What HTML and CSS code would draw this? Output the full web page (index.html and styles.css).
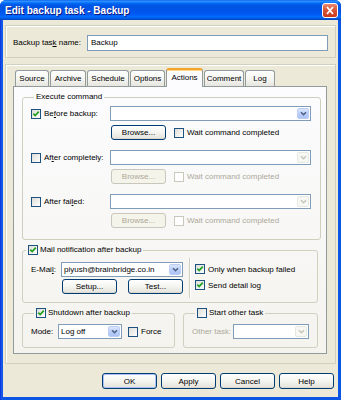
FILE: index.html
```html
<!DOCTYPE html>
<html lang="en">
<head>
    <meta charset="UTF-8">
    <title>Edit backup task - Backup</title>
    <link rel="stylesheet" href="styles.css">
</head>
<body>
<div class="window">
    <div class="titlebar">
        <span class="title">Edit backup task - Backup</span>
        <span class="close-btn">
            <svg width="14" height="13" viewBox="0 0 14 13"><path d="M4 3 L10 10 M10 3 L4 10"/></svg>
        </span>
    </div>

    <div class="client">
        <!-- task name -->
        <div class="frame name-frame">
            <label class="name-label">Backup tas<u>k</u> name:</label>
            <div class="textbox">Backup</div>
        </div>

        <!-- tabs -->
        <div class="frame tabs-frame">
            <div class="tab-strip">
                <span class="tab tab-source">Source</span>
                <span class="tab tab-archive">Archive</span>
                <span class="tab tab-schedule">Schedule</span>
                <span class="tab tab-options">Options</span>
                <span class="tab tab-actions active">Actions</span>
                <span class="tab tab-comment">Comment</span>
                <span class="tab tab-log">Log</span>
            </div>

            <div class="tab-panel">
                <fieldset class="group exec-group">
                    <legend>Execute command</legend>

                    <div class="cmd-row">
                        <label class="check-label cmd-label"><span class="checkbox checked"><svg viewBox="0 0 8 8"><path d="M1.3 3.6 L3.2 5.6 L6.8 1.7"/></svg></span><span>Be<u>f</u>ore backup:</span></label>
                        <div class="combo cmd-combo"><span class="combo-text"></span><span class="drop"><svg viewBox="0 0 9 9"><path d="M2 3.2 L4.5 5.7 L7 3.2"/></svg></span></div>
                    </div>
                    <div class="browse-row">
                        <button class="btn">Browse...</button>
                        <label class="check-label wait-label"><span class="checkbox"></span><span>Wait command completed</span></label>
                    </div>

                    <div class="cmd-row">
                        <label class="check-label cmd-label"><span class="checkbox"></span><span>Af<u>t</u>er completely:</span></label>
                        <div class="combo cmd-combo disabled"><span class="combo-text"></span><span class="drop"><svg viewBox="0 0 9 9"><path d="M2 3.2 L4.5 5.7 L7 3.2"/></svg></span></div>
                    </div>
                    <div class="browse-row">
                        <button class="btn" disabled>Browse...</button>
                        <label class="check-label wait-label disabled"><span class="checkbox"></span><span>Wait command completed</span></label>
                    </div>

                    <div class="cmd-row">
                        <label class="check-label cmd-label"><span class="checkbox"></span><span>After fai<u>l</u>ed:</span></label>
                        <div class="combo cmd-combo disabled"><span class="combo-text"></span><span class="drop"><svg viewBox="0 0 9 9"><path d="M2 3.2 L4.5 5.7 L7 3.2"/></svg></span></div>
                    </div>
                    <div class="browse-row">
                        <button class="btn" disabled>Browse...</button>
                        <label class="check-label wait-label disabled"><span class="checkbox"></span><span>Wait command completed</span></label>
                    </div>
                </fieldset>

                <fieldset class="group mail-group">
                    <legend><label class="check-label"><span class="checkbox checked"><svg viewBox="0 0 8 8"><path d="M1.3 3.6 L3.2 5.6 L6.8 1.7"/></svg></span><span>Mail notification after backup</span></label></legend>
                    <div class="mail-body">
                        <div class="mail-left">
                            <div class="mail-row">
                                <span class="field-label email-label">E-Mai<u>l</u>:</span>
                                <div class="combo email-combo"><span class="combo-text">piyush@brainbridge.co.in</span><span class="drop"><svg viewBox="0 0 9 9"><path d="M2 3.2 L4.5 5.7 L7 3.2"/></svg></span></div>
                            </div>
                            <div class="mail-buttons">
                                <button class="btn">Setup...</button>
                                <button class="btn">Test...</button>
                            </div>
                        </div>
                        <div class="mail-right">
                            <label class="check-label"><span class="checkbox checked"><svg viewBox="0 0 8 8"><path d="M1.3 3.6 L3.2 5.6 L6.8 1.7"/></svg></span><span>Only when backup failed</span></label>
                            <label class="check-label"><span class="checkbox checked"><svg viewBox="0 0 8 8"><path d="M1.3 3.6 L3.2 5.6 L6.8 1.7"/></svg></span><span>Send detail log</span></label>
                        </div>
                    </div>
                </fieldset>

                <div class="bottom-groups">
                    <fieldset class="group shutdown-group">
                        <legend><label class="check-label"><span class="checkbox checked"><svg viewBox="0 0 8 8"><path d="M1.3 3.6 L3.2 5.6 L6.8 1.7"/></svg></span><span>Shutdown after backup</span></label></legend>
                        <div class="mode-row">
                            <span class="field-label mode-label">Mode:</span>
                            <div class="combo mode-combo"><span class="combo-text">Log off</span><span class="drop"><svg viewBox="0 0 9 9"><path d="M2 3.2 L4.5 5.7 L7 3.2"/></svg></span></div>
                            <label class="check-label force-label"><span class="checkbox"></span><span>Force</span></label>
                        </div>
                    </fieldset>

                    <fieldset class="group other-group">
                        <legend><label class="check-label"><span class="checkbox"></span><span>Start other task</span></label></legend>
                        <div class="mode-row">
                            <span class="field-label other-label">Other task:</span>
                            <div class="combo other-combo disabled"><span class="combo-text"></span><span class="drop"><svg viewBox="0 0 9 9"><path d="M2 3.2 L4.5 5.7 L7 3.2"/></svg></span></div>
                        </div>
                    </fieldset>
                </div>
            </div>
        </div>

        <!-- dialog buttons -->
        <div class="dialog-buttons">
            <button class="btn default">OK</button>
            <button class="btn">Apply</button>
            <button class="btn">Cancel</button>
            <button class="btn">Help</button>
        </div>
    </div>
</div>
</body>
</html>
```

FILE: styles.css
```css
/* Basic Reset */
* {
    margin: 0;
    padding: 0;
    box-sizing: border-box;
}

body {
    width: 341px;
    height: 400px;
    overflow: hidden;
    background: #ffffff;
    font-family: "Liberation Sans", Arial, sans-serif;
    font-size: 8px;
    color: #000000;
}

u {
    text-decoration: underline;
    text-underline-offset: 1px;
}

/* Window frame */
.window {
    width: 341px;
    height: 400px;
    display: flex;
    flex-direction: column;
    background: linear-gradient(to right, #0831d9, #1a5ef0 2px, #0a55e3 3px);
    border-radius: 6px 6px 0 0;
}

.titlebar {
    height: 20px;
    display: flex;
    align-items: center;
    justify-content: space-between;
    padding: 0 3px 0 5px;
    border-radius: 6px 6px 0 0;
    background: linear-gradient(to bottom, #0058ee 0%, #3593ff 5%, #288eff 8%, #127dff 12%, #036ffc 15%, #0262ee 20%, #0057e5 28%, #0054e3 35%, #0055eb 60%, #005bf5 72%, #026afe 82%, #0062ef 90%, #0052d6 95%, #0040ab 100%);
}

.title {
    color: #ffffff;
    font-weight: bold;
    font-size: 10px;
    text-shadow: 1px 1px #0a1883;
}

.close-btn {
    width: 16px;
    height: 15px;
    border: 1px solid #ffffff;
    border-radius: 3px;
    background: linear-gradient(to bottom, #e98a71, #dc5a3c 40%, #c8391d);
    display: flex;
    align-items: center;
    justify-content: center;
}

.close-btn path {
    stroke: #ffffff;
    stroke-width: 1.8;
    fill: none;
}

.client {
    flex: 1;
    margin: 0 3px 3px;
    padding: 5px 2px 0;
    background: #ece9d8;
    display: flex;
    flex-direction: column;
}

.frame {
    border: 1px solid #d0d0bf;
    box-shadow: inset 1px 1px #ffffff;
}

/* Task name */
.name-frame {
    height: 33px;
    display: flex;
    align-items: flex-start;
    padding: 9px 7px 0 7px;
}

.name-label {
    line-height: 16px;
    margin-right: auto;
}

.textbox {
    width: 241px;
    height: 16px;
    border: 1px solid #7f9db9;
    background: #ffffff;
    padding-left: 3px;
    line-height: 14px;
}

/* Tabs */
.tabs-frame {
    margin-top: 6px;
    height: 300px;
    padding: 5px 8px 9px 7px;
    display: flex;
    flex-direction: column;
}

.tab-strip {
    height: 16px;
    display: flex;
    align-items: flex-end;
    gap: 1px;
    padding-left: 2px;
}

.tab {
    height: 16px;
    border: 1px solid #919b9c;
    border-bottom: none;
    border-radius: 3px 3px 0 0;
    background: linear-gradient(to bottom, #ffffff, #f3f3ef 60%, #e6e5de);
    text-align: center;
    line-height: 15px;
}

.tab-source { width: 34px; }
.tab-archive { width: 36px; }
.tab-schedule { width: 42px; }
.tab-options { width: 35px; }
.tab-actions { width: 37px; }
.tab-comment { width: 40px; }
.tab-log { width: 30px; }

.tab.active {
    position: relative;
    z-index: 1;
    height: 19px;
    margin-bottom: -1px;
    border-top: 2px solid #f5a42a;
    background: #fcfcfe;
    line-height: 15px;
    box-shadow: inset 0 1px #ffd68a;
}

.tab-panel {
    height: 268px;
    border: 1px solid #919b9c;
    background: linear-gradient(to bottom, #fcfcfe, #f4f3ee);
    padding: 4px 0 0 8px;
}

/* Group boxes */
.group {
    border: 1px solid #d0d0bf;
    border-radius: 3px;
    min-width: 0;
}

.group legend {
    margin-left: 3px;
    padding: 0 2px;
    line-height: 12px;
}

.group legend .check-label {
    gap: 2px;
}

.check-label {
    display: flex;
    align-items: center;
    gap: 3px;
    white-space: nowrap;
}

.checkbox {
    width: 10px;
    height: 10px;
    border: 1px solid #1c5180;
    background: linear-gradient(135deg, #dcdcd7, #ffffff);
    display: flex;
    align-items: center;
    justify-content: center;
    flex-shrink: 0;
}

.checkbox svg {
    width: 8px;
    height: 8px;
}

.checkbox path {
    stroke: #21a121;
    stroke-width: 1.7;
    fill: none;
}

.disabled {
    color: #aca899;
}

.disabled .checkbox {
    border-color: #cac8bb;
    background: #ffffff;
}

/* Combo boxes */
.combo {
    height: 15px;
    border: 1px solid #7f9db9;
    background: #ffffff;
    display: flex;
}

.combo-text {
    flex: 1;
    padding-left: 2px;
    line-height: 13px;
    white-space: nowrap;
    overflow: hidden;
}

.drop {
    width: 12px;
    margin: 1px;
    border-radius: 2px;
    background: linear-gradient(to bottom, #dbe6fd, #bcd0fa 50%, #adc3f5);
    border: 1px solid #bccdf5;
    display: flex;
    align-items: center;
    justify-content: center;
}

.drop svg {
    width: 9px;
    height: 9px;
}

.drop path {
    stroke: #4d6185;
    stroke-width: 1.6;
    fill: none;
}

.combo.disabled .drop {
    background: #f7f7f4;
    border-color: #e8e8e2;
}

.combo.disabled .drop path {
    stroke: #c9c7ba;
}

/* Buttons */
.btn {
    width: 55px;
    height: 15px;
    border: 1px solid #003c74;
    border-radius: 3px;
    background: linear-gradient(to bottom, #ffffff, #f4f4f0 50%, #e6e5de 90%, #d6d0c5);
    font-family: inherit;
    font-size: 8px;
    color: #000000;
    display: flex;
    align-items: center;
    justify-content: center;
}

.btn:disabled {
    border-color: #c9c7ba;
    background: #f5f4ea;
    color: #aca899;
}

.btn.default {
    box-shadow: inset 0 0 0 1px #a9c1f4;
}

/* Execute command */
.exec-group {
    width: 299px;
    padding: 0 8px 11px 8px;
}

.cmd-row {
    height: 15px;
    margin-top: 10px;
    display: flex;
    align-items: center;
}

.exec-group legend + .cmd-row {
    margin-top: 3px;
}

.cmd-label {
    width: 79px;
}

.cmd-combo {
    width: 201px;
}

.browse-row {
    height: 15px;
    margin-top: 4px;
    display: flex;
    align-items: center;
    padding-left: 80px;
}

.wait-label {
    margin-left: 8px;
}

/* Mail notification */
.mail-group {
    width: 296px;
    margin-top: 4px;
}

.mail-body {
    display: flex;
}

.mail-left {
    width: 166px;
    padding: 6px 0 8px 8px;
}

.mail-row {
    height: 15px;
    display: flex;
    align-items: center;
}

.email-label {
    width: 30px;
}

.email-combo {
    width: 122px;
}

.mail-buttons {
    margin-top: 2px;
    display: flex;
    gap: 11px;
    padding-left: 31px;
}

.mail-buttons .btn {
    height: 15px;
}

.mail-right {
    flex: 1;
    margin: 2px 0 4px;
    padding: 6px 0 0 5px;
    border-left: 1px solid #d0d0bf;
    box-shadow: inset 1px 0 #ffffff;
    display: flex;
    flex-direction: column;
    gap: 6px;
}

/* Shutdown / other task */
.bottom-groups {
    margin-top: 4px;
    display: flex;
    gap: 8px;
}

.shutdown-group {
    width: 153px;
    padding: 0 8px 8px;
}

.other-group {
    width: 135px;
    padding: 0 8px 8px;
}

.mode-row {
    height: 15px;
    margin-top: 5px;
    display: flex;
    align-items: center;
}

.mode-label {
    width: 27px;
}

.mode-combo {
    width: 64px;
}

.force-label {
    margin-left: 6px;
}

.other-label {
    width: 42px;
    color: #aca899;
}

.other-combo {
    width: 77px;
}

/* Dialog buttons */
.dialog-buttons {
    margin-top: 9px;
    display: flex;
    justify-content: flex-end;
    gap: 4px;
    padding-right: 2px;
}

.dialog-buttons .btn {
    height: 16px;
}
```
